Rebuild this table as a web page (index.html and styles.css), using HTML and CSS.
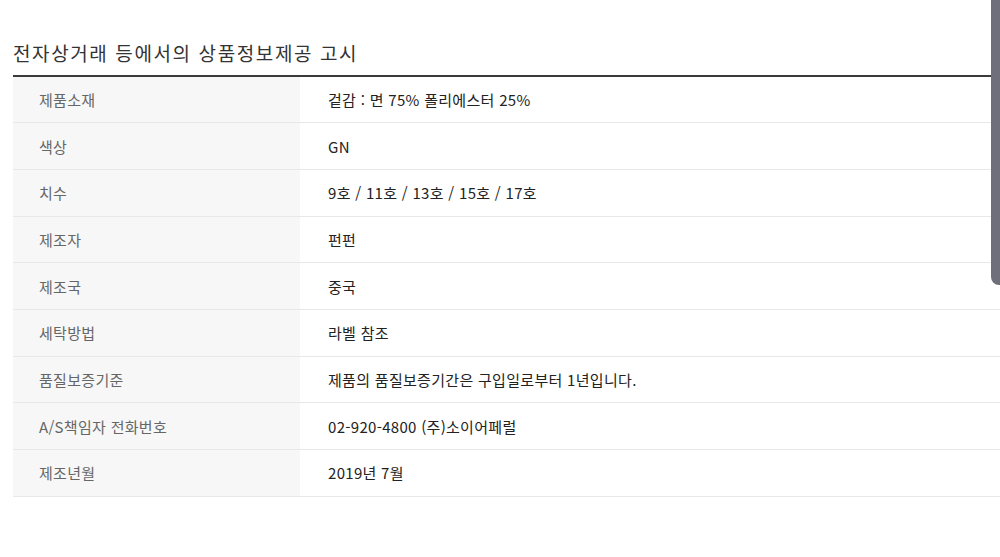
FILE: index.html
```html
<!DOCTYPE html>
<html lang="ko">
<head>
<meta charset="utf-8">
<link rel="stylesheet" href="styles.css">
</head>
<body>
<div class="page">
  <h2 class="title">전자상거래 등에서의 상품정보제공 고시</h2>
  <table class="info">
    <tr><th>제품소재</th><td>겉감 : 면 75% 폴리에스터 25%</td></tr>
    <tr><th>색상</th><td>GN</td></tr>
    <tr><th>치수</th><td>9호 / 11호 / 13호 / 15호 / 17호</td></tr>
    <tr><th>제조자</th><td>펀펀</td></tr>
    <tr><th>제조국</th><td>중국</td></tr>
    <tr><th>세탁방법</th><td>라벨 참조</td></tr>
    <tr><th>품질보증기준</th><td>제품의 품질보증기간은 구입일로부터 1년입니다.</td></tr>
    <tr><th>A/S책임자 전화번호</th><td>02-920-4800 (주)소이어페럴</td></tr>
    <tr><th>제조년월</th><td>2019년 7월</td></tr>
  </table>
</div>
<div class="scrollbar"></div>
</body>
</html>
```

FILE: styles.css
```css
html, body {
  margin: 0;
  padding: 0;
  background: #fff;
}
body {
  font-family: "Noto Sans CJK KR", "Noto Sans", sans-serif;
  width: 1000px;
  height: 557px;
  overflow: hidden;
  position: relative;
}
.page {
  padding: 40px 0 0 13px;
}
.title {
  margin: 0;
  height: 35px;
  font-size: 19px;
  font-weight: 400;
  line-height: 26px;
  letter-spacing: 1.6px;
  color: #333;
}
.info {
  border-collapse: collapse;
  width: 987px;
  border-top: 2px solid #3a3a3a;
}
.info tr {
  height: 46.7px;
  border-bottom: 1px solid #e8e8e8;
}
.info th {
  width: 261px;
  background: #f7f7f7;
  text-align: left;
  font-weight: 400;
  font-size: 15px;
  color: #666;
  letter-spacing: 0.3px;
  padding: 0 0 0 26px;
}
.info td {
  font-size: 15px;
  color: #222;
  letter-spacing: 0.3px;
  padding: 0 0 0 28px;
}
.scrollbar {
  position: absolute;
  top: 0;
  right: 0;
  width: 9px;
  height: 285px;
  background: #6f6e7b;
  border-bottom-left-radius: 8px;
}
```
